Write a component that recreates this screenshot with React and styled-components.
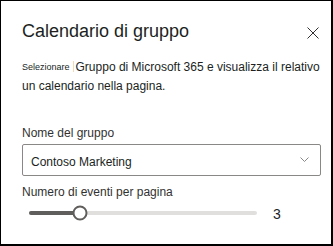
import React from "react";
import styled, { createGlobalStyle } from "styled-components";

const Global = createGlobalStyle`
  html, body { margin: 0; padding: 0; background: #ffffff; }
  body { font-family: "Liberation Sans", Arial, sans-serif; color: #323130; }
  * { box-sizing: border-box; }
`;

const Panel = styled.div`
  width: 333px;
  height: 246px;
  border-style: solid;
  border-color: #000;
  border-width: 1px 2px 2px 1px;
  padding: 18px 10px 0 21px;
  display: flex;
  flex-direction: column;
  background: #fff;
`;

const Header = styled.div`
  display: flex;
  align-items: center;
  justify-content: space-between;
  height: 24px;
`;

const Title = styled.h1`
  margin: 0;
  font-size: 18px;
  line-height: 24px;
  font-weight: 400;
  color: #201f1e;
`;

const CloseButton = styled.button`
  border: 0;
  background: none;
  padding: 0;
  margin: 4px 2px 0 0;
  width: 13px;
  height: 13px;
  display: flex;
  align-items: center;
  justify-content: center;
  color: #323130;
`;

const Description = styled.p`
  margin: 15px 0 0;
  font-size: 12px;
  line-height: 19px;
  color: #201f1e;
`;

const Small = styled.span`
  display: inline-block;
  font-size: 9px;
  line-height: 10px;
  margin-right: 3px;
  vertical-align: 1px;
`;

const Mark = styled.span`
  display: inline-block;
  width: 1px;
  height: 11px;
  background: #f3d9b8;
  vertical-align: -1px;
  margin-right: 2px;
`;

const Label = styled.label`
  display: block;
  font-size: 12px;
  line-height: 16px;
  color: #323130;
  margin-top: ${(p) => p.$top}px;
`;

const Dropdown = styled.div`
  margin-top: 3px;
  height: 32px;
  border: 1px solid #8a8886;
  border-radius: 2px;
  display: flex;
  align-items: center;
  justify-content: space-between;
  padding: 4px 11px 0 8px;
  font-size: 12px;
  color: #201f1e;
`;

const Chevron = styled.svg`
  display: block;
  margin-top: -6px;
`;

const SliderRow = styled.div`
  height: 26px;
  display: flex;
  align-items: center;
  padding-left: 7px;
`;

const Track = styled.div`
  position: relative;
  width: 228px;
  height: 4px;
  border-radius: 2px;
  background: #e1dfdd;
`;

const Fill = styled.div`
  height: 4px;
  border-radius: 2px;
  background: #605e5c;
`;

const Thumb = styled.div`
  position: absolute;
  top: 50%;
  width: 15px;
  height: 15px;
  border-radius: 50%;
  border: 2px solid #605e5c;
  background: #fff;
  transform: translate(-50%, -50%);
`;

const Value = styled.span`
  margin-left: 16px;
  font-size: 14px;
  line-height: 16px;
  color: #201f1e;
  padding-top: 1px;
`;

export default function App() {
  const min = 1;
  const max = 10;
  const value = 3;
  const pct = ((value - min) / (max - min)) * 100;
  return (
    <>
      <Global />
      <Panel>
        <Header>
          <Title>Calendario di gruppo</Title>
          <CloseButton aria-label="Chiudi">
            <svg width="12" height="12" viewBox="0 0 12 12">
              <path d="M0.5 0.5 L11.5 11.5 M11.5 0.5 L0.5 11.5" stroke="#323130" strokeWidth="1" fill="none" />
            </svg>
          </CloseButton>
        </Header>
        <Description>
          <Small>Selezionare</Small>
          <Mark />
          Gruppo di Microsoft 365 e visualizza il relativo un calendario nella pagina.
        </Description>
        <Label $top={29}>Nome del gruppo</Label>
        <Dropdown>
          <span>Contoso Marketing</span>
          <Chevron width="9" height="5" viewBox="0 0 9 5">
            <path d="M0.5 0.5 L4.5 4.5 L8.5 0.5" stroke="#8a8886" strokeWidth="1" fill="none" />
          </Chevron>
        </Dropdown>
        <Label $top={8}>Numero di eventi per pagina</Label>
        <SliderRow>
          <Track>
            <Fill style={{ width: `${pct}%` }} />
            <Thumb style={{ left: `${pct}%` }} />
          </Track>
          <Value>3</Value>
        </SliderRow>
      </Panel>
    </>
  );
}
